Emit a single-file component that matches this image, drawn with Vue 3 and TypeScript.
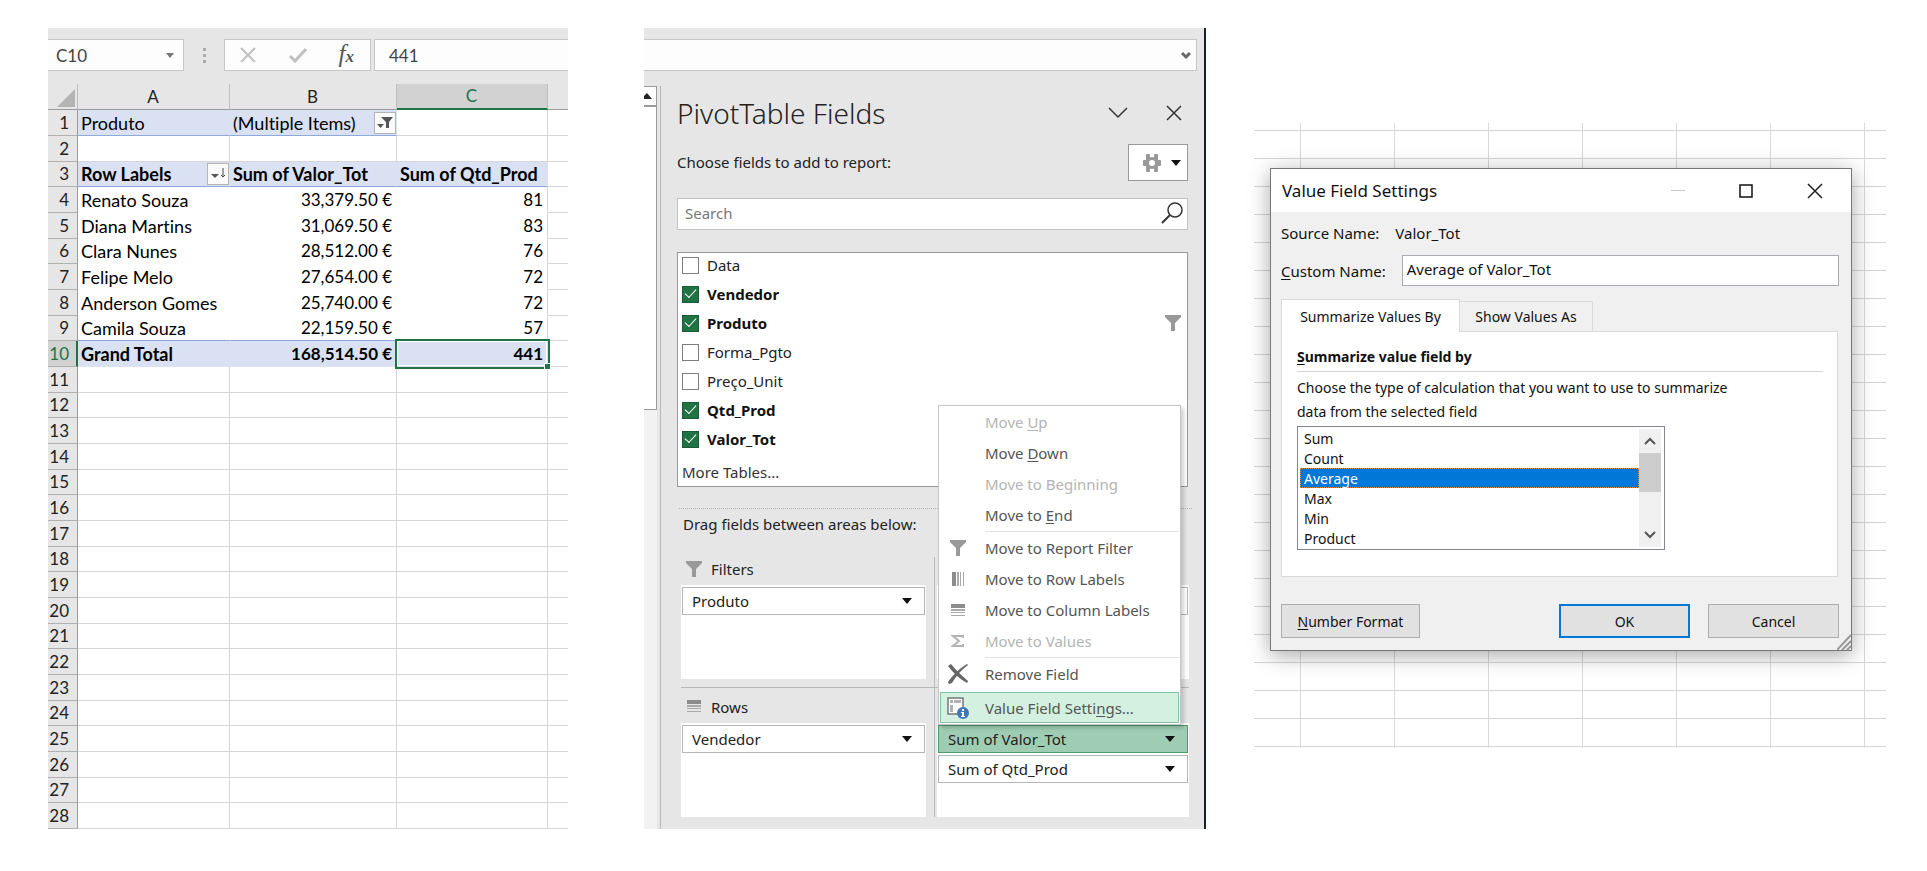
<script setup lang="ts">
import { ref } from 'vue'

interface SheetRow {
  n: number
  a?: string
  b?: string
  c?: string
  kind: 'filter' | 'head' | 'data' | 'total' | 'blank'
  last?: boolean
}

interface Field {
  name: string
  checked: boolean
  filtered?: boolean
}

interface MenuItem {
  before: string
  key?: string
  after?: string
  icon?: 'funnel' | 'cols' | 'rows' | 'sigma' | 'remove' | 'settings'
  disabled?: boolean
  ruled?: boolean
  active?: boolean
}

const filled: SheetRow[] = [
  { n: 1, a: 'Produto', b: '(Multiple Items)', kind: 'filter' },
  { n: 2, kind: 'blank' },
  { n: 3, a: 'Row Labels', b: 'Sum of Valor_Tot', c: 'Sum of Qtd_Prod', kind: 'head' },
  { n: 4, a: 'Renato Souza', b: '33,379.50 €', c: '81', kind: 'data' },
  { n: 5, a: 'Diana Martins', b: '31,069.50 €', c: '83', kind: 'data' },
  { n: 6, a: 'Clara Nunes', b: '28,512.00 €', c: '76', kind: 'data' },
  { n: 7, a: 'Felipe Melo', b: '27,654.00 €', c: '72', kind: 'data' },
  { n: 8, a: 'Anderson Gomes', b: '25,740.00 €', c: '72', kind: 'data' },
  { n: 9, a: 'Camila Souza', b: '22,159.50 €', c: '57', kind: 'data', last: true },
  { n: 10, a: 'Grand Total', b: '168,514.50 €', c: '441', kind: 'total' },
]
const rows: SheetRow[] = [
  ...filled,
  ...Array.from({ length: 18 }, (_, i): SheetRow => ({ n: i + 11, kind: 'blank' })),
]

const cellName = ref('C10')
const formula = ref('441')
const search = ref('')
const customName = ref('Average of Valor_Tot')
const summary = ref('Average')
const summaries: string[] = ['Sum', 'Count', 'Average', 'Max', 'Min', 'Product']

const fields = ref<Field[]>([
  { name: 'Data', checked: false },
  { name: 'Vendedor', checked: true },
  { name: 'Produto', checked: true, filtered: true },
  { name: 'Forma_Pgto', checked: false },
  { name: 'Preço_Unit', checked: false },
  { name: 'Qtd_Prod', checked: true },
  { name: 'Valor_Tot', checked: true },
])

const menu: MenuItem[] = [
  { before: 'Move ', key: 'U', after: 'p', disabled: true },
  { before: 'Move ', key: 'D', after: 'own' },
  { before: 'Move to Be', key: 'g', after: 'inning', disabled: true },
  { before: 'Move to ', key: 'E', after: 'nd' },
  { before: 'Move to Report Filter', icon: 'funnel', ruled: true },
  { before: 'Move to Row Labels', icon: 'cols' },
  { before: 'Move to Column Labels', icon: 'rows' },
  { before: 'Move to Values', icon: 'sigma', disabled: true },
  { before: 'Remove Field', icon: 'remove', ruled: true },
  { before: 'Value Field Setti', key: 'n', after: 'gs...', icon: 'settings', ruled: true, active: true },
]
</script>

<template>
  <main class="board">
    <section class="sheet" aria-label="Worksheet">
      <div class="bar">
        <div class="namebox">
          <input v-model="cellName" aria-label="Name box" />
          <svg width="8" height="5" viewBox="0 0 8 5"><path d="M0 0h8L4 5z" fill="#777" /></svg>
        </div>
        <svg class="grip" width="4" height="16" viewBox="0 0 4 16">
          <path d="M0 1h3v3H0zM0 7h3v3H0zM0 13h3v3H0z" fill="#ababab" />
        </svg>
        <div class="tools">
          <button type="button" aria-label="Cancel entry">
            <svg width="18" height="18" viewBox="0 0 18 18">
              <path d="M2 2l14 14M16 2L2 16" stroke="#c0c0c0" stroke-width="2" fill="none" />
            </svg>
          </button>
          <button type="button" aria-label="Accept entry">
            <svg width="20" height="18" viewBox="0 0 20 18">
              <path d="M2 10l5 5L18 3" stroke="#c0c0c0" stroke-width="3" fill="none" />
            </svg>
          </button>
          <button type="button" class="fx" aria-label="Insert function"><span>f</span><small>x</small></button>
        </div>
        <input v-model="formula" class="formula" aria-label="Formula" />
      </div>

      <table class="cells">
        <colgroup>
          <col class="c-n" />
          <col class="c-a" />
          <col class="c-b" />
          <col class="c-c" />
          <col class="c-rest" />
        </colgroup>
        <thead>
          <tr>
            <th class="corner">
              <svg width="18" height="18" viewBox="0 0 18 18"><path d="M18 0v18H0z" fill="#b4b4b4" /></svg>
            </th>
            <th scope="col">A</th>
            <th scope="col">B</th>
            <th scope="col" class="on">C</th>
            <th></th>
          </tr>
        </thead>
        <tbody>
          <tr v-for="r in rows" :key="r.n" :class="[r.kind, { last: r.last }]">
            <th scope="row">{{ r.n }}</th>
            <td>
              <div v-if="r.kind === 'head'" class="split">
                <span>{{ r.a }}</span>
                <button type="button" class="drop" aria-label="Sort row labels">
                  <svg width="18" height="18" viewBox="0 0 18 18">
                    <path d="M2 9h8l-4 4z" fill="#555" />
                    <path d="M14 3v9M12 10l2 2 2-2" stroke="#444" fill="none" />
                  </svg>
                </button>
              </div>
              <template v-else>{{ r.a }}</template>
            </td>
            <td>
              <div v-if="r.kind === 'filter'" class="split">
                <span>{{ r.b }}</span>
                <button type="button" class="drop" aria-label="Filter Produto">
                  <svg width="18" height="18" viewBox="0 0 18 18">
                    <path d="M5 3h12l-4 5v6h-3V8z" fill="#555" />
                    <path d="M1 10h7l-3.500 4z" fill="#555" />
                  </svg>
                </button>
              </div>
              <template v-else>{{ r.b }}</template>
            </td>
            <td>{{ r.c }}</td>
            <td></td>
          </tr>
        </tbody>
      </table>
    </section>

    <section class="excel" aria-label="PivotTable task pane">
      <div class="bar right">
        <button type="button" class="expand" aria-label="Expand formula bar">
          <svg width="12" height="9" viewBox="0 0 12 9">
            <path d="M2 2l4 4 4-4" stroke="#666" stroke-width="3" fill="none" />
          </svg>
        </button>
      </div>
      <div class="body">
        <div class="strip">
          <div class="strip-up">
            <svg width="8" height="6" viewBox="0 0 8 6"><path d="M3 0l5 6H0V3z" fill="#222" /></svg>
          </div>
          <div class="strip-thumb"></div>
        </div>

        <div class="pane">
          <header class="pane-head">
            <h1>PivotTable Fields</h1>
            <button type="button" class="bare" aria-label="Pane options">
              <svg width="20" height="14" viewBox="0 0 20 14">
                <path d="M1 2l9 9 9-9" stroke="#333" stroke-width="1.500" fill="none" />
              </svg>
            </button>
            <button type="button" class="bare" aria-label="Close pane">
              <svg width="16" height="16" viewBox="0 0 16 16">
                <path d="M1 1l14 14M15 1L1 15" stroke="#333" stroke-width="1.500" fill="none" />
              </svg>
            </button>
          </header>

          <div class="choose">
            <span>Choose fields to add to report:</span>
            <button type="button" class="gear" aria-label="Tools">
              <svg width="18" height="18" viewBox="0 0 18 18">
                <g fill="#999">
                  <rect x="3" y="0" width="4" height="18" rx="1" />
                  <rect x="11" y="0" width="4" height="18" rx="1" />
                  <rect x="0" y="6" width="18" height="6" rx="1" />
                  <circle cx="9" cy="9" r="6" />
                </g>
                <circle cx="9" cy="9" r="3" fill="#fff" />
              </svg>
              <svg width="10" height="6" viewBox="0 0 10 6"><path d="M0 0h10L5 6z" fill="#111" /></svg>
            </button>
          </div>

          <div class="search">
            <input v-model="search" type="search" placeholder="Search" aria-label="Search fields" />
            <svg width="22" height="22" viewBox="0 0 22 22">
              <circle cx="14" cy="8" r="7" stroke="#333" stroke-width="1.500" fill="none" />
              <path d="M9 13l-8 8" stroke="#333" stroke-width="2" />
            </svg>
          </div>

          <div class="fields">
            <label v-for="f in fields" :key="f.name" :class="{ bold: f.checked }">
              <input v-model="f.checked" type="checkbox" />
              <span>{{ f.name }}</span>
              <svg v-if="f.filtered" width="16" height="16" viewBox="0 0 16 16">
                <path d="M0 0h16v2l-6 6v8H6V8L0 2z" fill="#999" />
              </svg>
            </label>
            <a href="#" class="more">More Tables...</a>
          </div>

          <p class="drag">Drag fields between areas below:</p>

          <div class="areas">
            <div class="area">
              <h2>
                <svg width="16" height="16" viewBox="0 0 16 16">
                  <path d="M0 0h16v2l-6 6v8H6V8L0 2z" fill="#999" />
                </svg>
                Filters
              </h2>
              <div class="well">
                <button type="button" class="pill">
                  Produto
                  <svg width="10" height="6" viewBox="0 0 10 6"><path d="M0 0h10L5 6z" fill="#111" /></svg>
                </button>
              </div>
            </div>
            <div class="area side">
              <h2></h2>
              <div class="well"><div class="pill"></div></div>
            </div>
            <div class="area low">
              <h2>
                <svg width="16" height="13" viewBox="0 0 16 13">
                  <path d="M1 0h14v4H1z" fill="#8c8c8c" />
                  <path d="M1 5h14v2H1zM1 8h14v1H1zM1 11h14v1H1z" fill="#aaa" />
                </svg>
                Rows
              </h2>
              <div class="well">
                <button type="button" class="pill">
                  Vendedor
                  <svg width="10" height="6" viewBox="0 0 10 6"><path d="M0 0h10L5 6z" fill="#111" /></svg>
                </button>
              </div>
            </div>
            <div class="area side low">
              <h2></h2>
              <div class="well">
                <div class="anchor">
                  <button type="button" class="pill open">
                    Sum of Valor_Tot
                    <svg width="10" height="6" viewBox="0 0 10 6"><path d="M0 0h10L5 6z" fill="#111" /></svg>
                  </button>
                  <div class="menu" role="menu">
                    <button
                      v-for="m in menu"
                      :key="m.before + m.key"
                      type="button"
                      role="menuitem"
                      :disabled="m.disabled"
                      :class="{ ruled: m.ruled, active: m.active }"
                    >
                      <span class="glyph">
                        <svg v-if="m.icon === 'funnel'" width="16" height="16" viewBox="0 0 16 16">
                          <path d="M0 0h16v2l-6 6v8H6V8L0 2z" fill="#999" />
                        </svg>
                        <svg v-else-if="m.icon === 'cols'" width="12" height="14" viewBox="0 0 12 14">
                          <path d="M0 0h4v14H0z" fill="#8c8c8c" />
                          <path d="M5 0h2v14H5zM8 0h1v14H8zM11 0h1v14h-1z" fill="#aaa" />
                        </svg>
                        <svg v-else-if="m.icon === 'rows'" width="14" height="12" viewBox="0 0 14 12">
                          <path d="M0 0h14v4H0z" fill="#8c8c8c" />
                          <path d="M0 5h14v2H0zM0 8h14v1H0zM0 11h14v1H0z" fill="#aaa" />
                        </svg>
                        <svg v-else-if="m.icon === 'sigma'" width="14" height="14" viewBox="0 0 14 14">
                          <path d="M12 4V2H2l6 5-6 5h10v-2" stroke="#b4b4b4" stroke-width="2" fill="none" />
                        </svg>
                        <svg v-else-if="m.icon === 'remove'" width="21" height="20" viewBox="0 0 21 20">
                          <path d="M0 2l3-2c4 5 10 11 17 17l-1 2C12 15 5 9 0 2z" fill="#666" />
                          <path d="M20 1C13 6 8 12 4 19l-3 1-1-2C5 11 12 4 19 0z" fill="#666" />
                        </svg>
                        <svg v-else-if="m.icon === 'settings'" width="22" height="22" viewBox="0 0 22 22">
                          <path d="M1 1h15v16H1z" fill="#fff" stroke="#777" stroke-width="1.500" />
                          <path d="M3 3h3v3H3zM7 3h7v3H7zM3 8h3v7H3z" fill="#b0b0b0" />
                          <circle cx="16" cy="16" r="6" fill="#3f78b5" />
                          <path d="M15 12h2v2h-2zM14 15h3v4h1v1h-4v-1h1v-3h-1z" fill="#fff" />
                        </svg>
                      </span>
                      <span>{{ m.before }}<u v-if="m.key">{{ m.key }}</u>{{ m.after }}</span>
                    </button>
                  </div>
                </div>
                <button type="button" class="pill">
                  Sum of Qtd_Prod
                  <svg width="10" height="6" viewBox="0 0 10 6"><path d="M0 0h10L5 6z" fill="#111" /></svg>
                </button>
              </div>
            </div>
          </div>
        </div>
      </div>
    </section>

    <section class="backdrop">
      <form class="dialog" role="dialog" aria-labelledby="dlg-title" @submit.prevent>
        <header class="titlebar">
          <h2 id="dlg-title">Value Field Settings</h2>
          <button type="button" class="win" aria-label="Minimize" disabled>
            <svg width="14" height="14" viewBox="0 0 14 14"><path d="M0 6h14v1H0z" fill="#c8c8c8" /></svg>
          </button>
          <button type="button" class="win" aria-label="Maximize">
            <svg width="14" height="14" viewBox="0 0 14 14">
              <path d="M1 1h12v12H1z" fill="none" stroke="#111" stroke-width="1.500" />
            </svg>
          </button>
          <button type="button" class="win" aria-label="Close">
            <svg width="16" height="16" viewBox="0 0 16 16">
              <path d="M1 1l14 14M15 1L1 15" stroke="#222" stroke-width="1.500" />
            </svg>
          </button>
        </header>

        <div class="content">
          <div class="source"><span>Source Name:</span><span>Valor_Tot</span></div>
          <div class="custom">
            <label for="custom-name"><u>C</u>ustom Name:</label>
            <input id="custom-name" v-model="customName" />
          </div>

          <div class="tabs" role="tablist">
            <button type="button" role="tab" class="tab current" aria-selected="true">Summarize Values By</button>
            <button type="button" role="tab" class="tab" aria-selected="false">Show Values As</button>
          </div>
          <div class="tabpanel" role="tabpanel">
            <label class="legend" for="summary-list"><u>S</u>ummarize value field by</label>
            <p>Choose the type of calculation that you want to use to summarize<br />data from the selected field</p>
            <div class="listbox">
              <select id="summary-list" v-model="summary" size="6">
                <option v-for="s in summaries" :key="s" :value="s">{{ s }}</option>
              </select>
              <div class="scroll">
                <svg width="12" height="8" viewBox="0 0 12 8">
                  <path d="M1 7l5-5 5 5" stroke="#555" stroke-width="2" fill="none" />
                </svg>
                <div class="thumb"></div>
                <svg width="12" height="8" viewBox="0 0 12 8">
                  <path d="M1 1l5 5 5-5" stroke="#555" stroke-width="2" fill="none" />
                </svg>
              </div>
            </div>
          </div>

          <footer class="actions">
            <button type="button" class="push format"><span><u>N</u>umber Format</span></button>
            <button type="submit" class="push ok">OK</button>
            <button type="button" class="push">Cancel</button>
          </footer>
        </div>
        <svg class="sizer" width="14" height="16" viewBox="0 0 14 16">
          <path d="M0 16L14 1M5 16l9-9M10 16l4-4" stroke="#999" stroke-width="2" />
        </svg>
      </form>
    </section>
  </main>
</template>

<style>
body {
  margin: 0;
  background: #fff;
}
</style>

<style scoped>
* {
  box-sizing: border-box;
}
button,
input,
select {
  font: inherit;
  color: inherit;
  margin: 0;
  padding: 0;
  border: 0;
  border-radius: 0;
  background: none;
  outline: none;
}
h1,
h2,
p {
  margin: 0;
  font-weight: 400;
}
svg {
  display: block;
  flex: none;
}
u {
  text-underline-offset: 2px;
}
.board {
  display: grid;
  grid-template-columns: minmax(0, 520fr) minmax(0, 638fr) minmax(0, 680fr);
  align-items: start;
  padding: 28px 41px 42px 48px;
  font-family: 'Noto Sans', 'Open Sans', sans-serif;
  font-size: 15px;
  color: #222;
}

/* worksheet */
.sheet {
  font-family: Lato, 'Open Sans', sans-serif;
  font-size: 17px;
  font-variant-ligatures: none;
}
.bar {
  display: flex;
  align-items: center;
  height: 56px;
  padding: 11px 0 13px;
  background: #e6e6e6;
}
.namebox {
  display: flex;
  align-items: center;
  width: 136px;
  height: 32px;
  padding: 0 9px 0 8px;
  border: 1px solid #c6c6c6;
  border-left: 0;
  background: #fdfdfd;
  color: #444;
}
.namebox input {
  flex: 1;
  min-width: 0;
}
.grip {
  margin: 0 17px 0 19px;
}
.tools {
  display: flex;
  align-items: center;
  justify-content: space-between;
  width: 147px;
  height: 32px;
  padding: 0 16px 0 14px;
  border: 1px solid #c6c6c6;
  background: #fdfdfd;
}
.fx {
  font-family: 'Liberation Serif', serif;
  font-style: italic;
  font-size: 25px;
  line-height: 28px;
  color: #555;
}
.fx small {
  font-size: 17px;
  font-weight: 700;
}
.formula {
  flex: 1;
  min-width: 0;
  height: 32px;
  margin-left: 3px;
  padding: 0 14px;
  border: 1px solid #c6c6c6;
  border-right: 0;
  background: #fdfdfd;
  color: #444;
}

.cells {
  width: 100%;
  table-layout: fixed;
  border-collapse: separate;
  border-spacing: 0;
  color: #000;
}
.c-n {
  width: 30px;
}
.c-a {
  width: 152px;
}
.c-b {
  width: 167px;
}
.c-c {
  width: 151px;
}
.c-rest {
  width: 20px;
}
.cells th,
.cells td {
  padding: 0 4px 0 3px;
  white-space: nowrap;
  line-height: 24px;
}
.cells th {
  font-weight: 400;
  text-align: center;
  background: #e6e6e6;
  color: #222;
}
.cells thead th {
  height: 25px;
  border-right: 1px solid #bdbdbd;
  border-bottom: 1px solid #9b9b9b;
}
.cells thead th:last-child,
.cells td:last-child {
  border-right: 0;
}
.cells thead th.on {
  background: #d2d2d2;
  color: #217346;
  border-bottom: 2px solid #217346;
}
.cells .corner {
  padding: 0 3px 2px 9px;
  vertical-align: bottom;
}
.cells tbody tr {
  height: 26px;
}
.cells tbody tr:nth-child(3n) {
  height: 25px;
}
.cells tbody th {
  padding: 0 8px 0 0;
  text-align: right;
  border-right: 1px solid #9b9b9b;
  border-bottom: 1px solid #b0b0b0;
}
.cells tbody td {
  border-right: 1px solid #d6d6d6;
  border-bottom: 1px solid #d6d6d6;
}
.cells .filter td,
.cells .head td,
.cells td:nth-child(2) {
  font-size: 18px;
}
.split {
  display: flex;
  align-items: center;
  justify-content: space-between;
  margin-right: -4px;
}
.drop {
  display: flex;
  align-items: center;
  justify-content: center;
  width: 22px;
  height: 22px;
  border: 1px solid #b5b5b5;
  background: #fbfbfb;
}
.cells .filter td:nth-child(2),
.cells .filter td:nth-child(3),
.cells .head td:nth-child(-n + 4) {
  background: #d9e1f2;
  border-right-color: #d9e1f2;
  border-bottom-color: #8ea9db;
}
.cells .head td {
  font-weight: 700;
}
.cells .data td:nth-child(2),
.cells .data td:nth-child(3) {
  border-right-color: #fff;
  border-bottom-color: #fff;
}
.cells .data td:nth-child(4) {
  border-bottom-color: #fff;
}
.cells .data td:nth-child(n + 3),
.cells .total td:nth-child(n + 3) {
  text-align: right;
}
.cells .last td:nth-child(2),
.cells .last td:nth-child(3) {
  border-bottom-color: #8ea9db;
}
.cells .total td {
  font-weight: 700;
}
.cells .total td:nth-child(2),
.cells .total td:nth-child(3) {
  background: #d9e1f2;
  border-color: #d9e1f2;
}
.cells .total td:nth-child(4) {
  position: relative;
  background: #d9e1f2;
  border-color: #d9e1f2;
  outline: 2px solid #217346;
  box-shadow: inset 0 0 0 1px #fff;
}
.cells .total td:nth-child(4)::after {
  content: '';
  position: absolute;
  right: -4px;
  bottom: -4px;
  width: 5px;
  height: 5px;
  border: 1px solid #fff;
  background: #217346;
}
.cells .total th {
  background: #d2d2d2;
  color: #217346;
  border-right: 2px solid #217346;
  padding-right: 7px;
}

/* task pane window */
.excel {
  margin-left: 76px;
  border-right: 2px solid #1a202c;
  background: #e6e6e6;
}
.bar.right {
  padding-right: 7px;
}
.expand {
  display: flex;
  align-items: center;
  justify-content: flex-end;
  flex: 1;
  height: 32px;
  padding-right: 4px;
  border: 1px solid #c6c6c6;
  border-left: 0;
  background: #fdfdfd;
}
.body {
  display: flex;
  padding-top: 2px;
}
.strip {
  display: flex;
  flex-direction: column;
  width: 13px;
  margin-right: 3px;
  background: #f2f2f2;
}
.strip-up {
  display: flex;
  align-items: center;
  height: 21px;
  border: 1px solid #999;
  border-left: 0;
  border-bottom-width: 2px;
  background: #fff;
}
.strip-thumb {
  height: 303px;
  border-right: 1px solid #999;
  border-bottom: 1px solid #999;
  background: #fff;
}
.pane {
  flex: 1;
  min-width: 0;
  padding: 0 16px 12px;
  border-left: 1px solid #b8b8b8;
}
.pane-head {
  display: flex;
  align-items: center;
  height: 58px;
  gap: 38px;
  padding: 0 6px 4px 0;
}
.pane-head h1 {
  flex: 1;
  font-size: 28px;
  font-weight: 300;
  line-height: 40px;
  white-space: nowrap;
  color: #222;
}
.bare {
  display: flex;
}
.choose {
  display: flex;
  align-items: center;
  justify-content: space-between;
  height: 37px;
}
.choose span {
  padding-bottom: 2px;
}
.gear {
  display: flex;
  align-items: center;
  justify-content: space-between;
  width: 60px;
  height: 37px;
  padding: 0 6px 0 14px;
  border: 1px solid #999;
  background: #fff;
}
.search {
  display: flex;
  align-items: center;
  height: 32px;
  margin-top: 17px;
  padding: 0 4px 2px 7px;
  border: 1px solid #c3c3c3;
  background: #fff;
}
.search input {
  flex: 1;
  min-width: 0;
  appearance: none;
}
.search input::placeholder {
  color: #777;
  opacity: 1;
}
.fields {
  display: flex;
  flex-direction: column;
  height: 235px;
  margin-top: 22px;
  border: 1px solid #999;
  background: #fff;
}
.fields label {
  display: flex;
  align-items: center;
  gap: 8px;
  height: 29px;
  padding: 0 6px 5px 4px;
}
.fields label span {
  flex: 1;
}
.fields .bold {
  font-weight: 700;
  color: #111;
}
.fields input {
  appearance: none;
  display: grid;
  place-items: center;
  width: 17px;
  height: 17px;
  border: 1px solid #7d7d7d;
  background: #fff;
}
.fields input:checked {
  border-color: #1a5c38;
  background: #217346;
}
.fields input:checked::after {
  content: '';
  width: 10px;
  height: 5px;
  margin-bottom: 4px;
  border: solid #fff;
  border-width: 0 0 1px 1px;
  transform: rotate(-47deg);
}
.more {
  margin-top: 4px;
  padding-left: 4px;
  line-height: 24px;
  color: #333;
  text-decoration: none;
}
.drag {
  margin: 21px -4px 0 2px;
  padding: 4px 0 22px 4px;
  border-top: 1px dotted #b0b0b0;
  line-height: 22px;
}
.areas {
  display: grid;
  grid-template-columns: 253fr 255fr;
  margin: 0 -1px 0 4px;
}
.area {
  min-width: 0;
  padding: 0 8px 8px 0;
}
.area.side {
  padding-right: 0;
  padding-left: 2px;
  border-left: 1px solid #b8b8b8;
}
.area.low {
  padding-bottom: 0;
  border-top: 1px solid #b8b8b8;
}
.area h2 {
  display: flex;
  align-items: center;
  gap: 9px;
  height: 28px;
  padding: 0 0 4px 5px;
  font-size: 15px;
}
.area.low h2 {
  height: 35px;
  padding: 2px 0 0 5px;
}
.well {
  display: flex;
  flex-direction: column;
  gap: 2px;
  height: 94px;
  padding: 2px 1px;
  background: #fff;
}
.pill {
  display: flex;
  align-items: center;
  justify-content: space-between;
  width: 100%;
  height: 28px;
  padding: 0 12px 0 9px;
  border: 1px solid #b5b5b5;
  background: #fff;
  text-align: left;
}
.pill.open {
  border-color: #4f9a6f;
  background: #9fcdb3;
}
.anchor {
  position: relative;
}
.menu {
  position: absolute;
  left: 0;
  bottom: 100%;
  width: 243px;
  padding: 1px 1px 1px;
  border: 1px solid #c6c6c6;
  background: #fff;
  box-shadow: 3px 3px 4px rgba(0, 0, 0, 0.18);
}
.menu button {
  display: grid;
  grid-template-columns: 34px 1fr;
  align-items: center;
  column-gap: 10px;
  width: 100%;
  height: 31px;
  padding: 0 0 1px 1px;
  text-align: left;
  white-space: nowrap;
  color: #555;
}
.menu button:disabled {
  color: #b4b4b4;
}
.menu .ruled {
  height: 33px;
  padding-top: 2px;
  background: linear-gradient(#e1e1e1, #e1e1e1) 45px 0 / 100% 1px no-repeat;
}
.menu .active {
  height: 31px;
  margin-top: 2px;
  padding: 0;
  border: 1px solid #86c3a0;
  background: #d3f0e0;
}
.glyph {
  display: flex;
  justify-content: center;
}

/* dialog over a worksheet */
.backdrop {
  margin: 95px 0 0 48px;
  padding: 45px 34px 97px 16px;
  background:
    repeating-linear-gradient(to right, transparent 0 46px, #d9d9d9 46px 47px, transparent 47px 94px),
    repeating-linear-gradient(to bottom, transparent 0 7px, #d4d4d4 7px 8px, transparent 8px 28px);
}
.dialog {
  position: relative;
  border: 1px solid #777;
  background: #f0f0f0;
  box-shadow: 0 4px 20px rgba(0, 0, 0, 0.35);
  color: #111;
}
.titlebar {
  display: flex;
  align-items: center;
  gap: 54px;
  height: 43px;
  padding: 0 28px 0 11px;
  background: #fff;
}
.titlebar h2 {
  flex: 1;
  font-size: 17px;
  white-space: nowrap;
}
.win {
  display: flex;
}
.content {
  padding: 8px 12px 12px 10px;
}
.source {
  display: flex;
  gap: 16px;
  line-height: 26px;
}
.custom {
  display: flex;
  align-items: center;
  gap: 16px;
  margin-top: 9px;
}
.custom input {
  flex: 1;
  min-width: 0;
  height: 31px;
  padding: 0 4px 3px;
  border: 1px solid #ababb3;
  background: #fff;
}
.tabs {
  display: flex;
  align-items: flex-end;
  margin-top: 13px;
  font-size: 14px;
}
.tab {
  width: 134px;
  height: 30px;
  margin-left: -1px;
  border: 1px solid #d9d9d9;
  border-bottom: 0;
}
.tab.current {
  width: 179px;
  height: 33px;
  margin: 0 0 -1px;
  background: #fff;
  z-index: 1;
}
.tabpanel {
  height: 246px;
  margin-right: 1px;
  padding: 14px 14px 0 15px;
  border: 1px solid #d9d9d9;
  background: #fff;
  font-size: 14px;
}
.legend {
  display: block;
  padding-bottom: 3px;
  border-bottom: 1px solid #d4d4d4;
  font-weight: 700;
  line-height: 22px;
}
.tabpanel p {
  margin: 4px 0 2px;
  line-height: 24px;
  white-space: nowrap;
}
.listbox {
  display: flex;
  width: 368px;
  height: 124px;
  padding: 1px 3px 1px 2px;
  border: 1px solid #828790;
}
.listbox select {
  flex: 1;
  height: 120px;
  overflow: hidden;
  appearance: none;
}
.listbox option {
  height: 20px;
  min-height: 20px;
  padding: 0 3px;
  line-height: 18px;
  border: 1px solid transparent;
  color: #111;
}
.listbox option:checked {
  border: 1px dotted #e08a3c;
  background: linear-gradient(#0078d7, #0078d7);
  -webkit-text-fill-color: #fff;
}
.scroll {
  display: flex;
  flex-direction: column;
  align-items: center;
  width: 22px;
  margin: 1px 0;
  padding: 8px 0;
  background: #f0f0f0;
}
.thumb {
  width: 22px;
  height: 39px;
  margin: 8px 0 auto;
  background: #cdcdcd;
}
.actions {
  display: flex;
  gap: 18px;
  margin-top: 27px;
}
.push {
  width: 131px;
  height: 34px;
  border: 1px solid #adadad;
  background: #e1e1e1;
  font-size: 14px;
}
.push.format {
  width: 139px;
  margin-right: auto;
}
.push.ok {
  border: 2px solid #0078d7;
}
.sizer {
  position: absolute;
  right: 0;
  bottom: 0;
}
</style>
